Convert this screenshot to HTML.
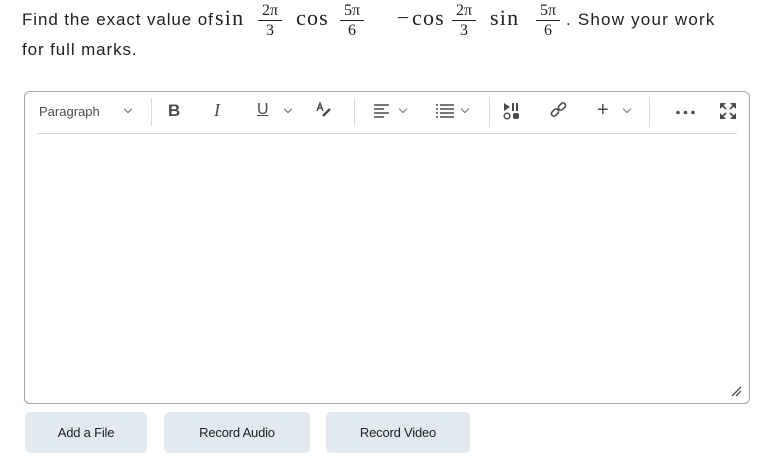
<!DOCTYPE html>
<html><head><style>
body{margin:0;width:770px;height:463px;background:#fff;font-family:"Liberation Sans",sans-serif;color:#494c4e;position:relative;overflow:hidden}
.a{position:absolute;white-space:nowrap}
.t{font-size:17px;color:#202122;letter-spacing:0.9px}
.m{font-family:"Liberation Serif",serif;font-size:22px;color:#202122;letter-spacing:1.2px}
.fr{position:absolute;font-family:"Liberation Serif",serif;font-size:16px;color:#202122;text-align:center;width:24px;line-height:17px}
.fr i{display:block;border-bottom:1px solid #202122;font-style:normal;padding-bottom:1px;margin-bottom:1px}
.ed{position:absolute;left:24px;top:91px;width:726px;height:313px;border:1px solid #a3a6a8;border-radius:6px;box-sizing:border-box}
.btn{position:absolute;top:412px;height:41px;background:#e3e9f1;border-radius:5px;font-size:13px;color:#202122;display:flex;align-items:center;justify-content:center;letter-spacing:-0.2px}
.ic{position:absolute;color:#494c4e}
.sep{position:absolute;top:98px;width:1px;height:28px;background:#d3d9e3}
.chev{position:absolute;top:106px;width:5px;height:5px;border-right:1.3px solid #6e7376;border-bottom:1.3px solid #6e7376;transform:rotate(45deg)}
</style></head><body>
<div class="a t" style="left:22px;top:10px">Find the exact value of</div>
<div class="a m" style="left:215px;top:5px">sin</div>
<div class="fr" style="left:258px;top:2px"><i>2π</i>3</div>
<div class="a m" style="left:296px;top:5px">cos</div>
<div class="fr" style="left:340px;top:2px"><i>5π</i>6</div>
<div class="a m" style="left:397px;top:5px">−</div>
<div class="a m" style="left:412px;top:5px">cos</div>
<div class="fr" style="left:452px;top:2px"><i>2π</i>3</div>
<div class="a m" style="left:490px;top:5px">sin</div>
<div class="fr" style="left:536px;top:2px"><i>5π</i>6</div>
<div class="a t" style="left:566px;top:10px;letter-spacing:1.2px">. Show your work</div>
<div class="a t" style="left:22px;top:40px">for full marks.</div>

<div class="ed"></div>
<div class="a" style="left:37px;top:133px;width:700px;height:1px;background:#d3d9e3"></div>
<div class="a" style="left:39px;top:104px;font-size:13px;color:#494c4e">Paragraph</div>
<div class="chev" style="left:125px"></div>
<div class="sep" style="left:151px"></div>
<div class="a" style="left:168px;top:101px;font-size:17px;font-weight:bold;color:#494c4e">B</div>
<div class="a" style="left:214px;top:100px;font-size:18px;font-style:italic;font-family:'Liberation Serif',serif;color:#494c4e">I</div>
<div class="a" style="left:257px;top:101px;font-size:16px;color:#494c4e;text-decoration:underline">U</div>
<div class="chev" style="left:285px"></div>
<svg class="ic" style="left:316px;top:102px" width="16" height="16"><path d="M1 9 L4 1 L7 9 M2.2 6 H5.8" stroke="#494c4e" stroke-width="1.5" fill="none"/><path d="M7 14 L14 7" stroke="#494c4e" stroke-width="2.5"/></svg>
<div class="sep" style="left:354px"></div>
<svg class="ic" style="left:374px;top:104px" width="16" height="14"><path d="M0 1h15M0 5h10M0 9h15M0 13h10" stroke="#494c4e" stroke-width="1.6"/></svg>
<div class="chev" style="left:400px"></div>
<svg class="ic" style="left:436px;top:104px" width="18" height="14"><path d="M0 1h2M4 1h14M0 5h2M4 5h14M0 9h2M4 9h14M0 13h2M4 13h14" stroke="#494c4e" stroke-width="1.6"/></svg>
<div class="chev" style="left:462px"></div>
<div class="sep" style="left:489px"></div>
<svg class="ic" style="left:503px;top:102px" width="18" height="18"><path d="M1 1 L7 5 L1 9Z" fill="#494c4e"/><path d="M10 1v8M14 1v8" stroke="#494c4e" stroke-width="2"/><circle cx="4" cy="14" r="2.8" stroke="#494c4e" stroke-width="1.5" fill="none"/><rect x="10" y="11" width="6" height="6" rx="2" fill="#494c4e"/></svg>
<svg class="ic" style="left:550px;top:101px" width="18" height="18"><rect x="1" y="9" width="8" height="5" rx="2.5" transform="rotate(-45 5 11.5)" stroke="#494c4e" stroke-width="1.6" fill="none"/><rect x="8" y="3" width="8" height="5" rx="2.5" transform="rotate(-45 12 5.5)" stroke="#494c4e" stroke-width="1.6" fill="none"/></svg>
<div class="a" style="left:597px;top:99px;font-size:20px;color:#494c4e">+</div>
<div class="chev" style="left:624px"></div>
<div class="sep" style="left:649px"></div>
<svg class="ic" style="left:676px;top:110px" width="20" height="5"><circle cx="2" cy="2.5" r="1.8" fill="#494c4e"/><circle cx="9.5" cy="2.5" r="1.8" fill="#494c4e"/><circle cx="17" cy="2.5" r="1.8" fill="#494c4e"/></svg>
<svg class="ic" style="left:719px;top:102px" width="18" height="18"><path d="M1 1h6L1 7Z M17 1h-6L17 7Z M1 17h6L1 11Z M17 17h-6L17 11Z" fill="#494c4e"/><path d="M2 2l5 5M16 2l-5 5M2 16l5-5M16 16l-5-5" stroke="#494c4e" stroke-width="1.8"/></svg>
<svg class="ic" style="left:729px;top:384px" width="14" height="14"><path d="M3 12L12 3M7 12L12 7" stroke="#494c4e" stroke-width="1.3"/></svg>

<div class="btn" style="left:25px;width:122px">Add a File</div>
<div class="btn" style="left:164px;width:146px">Record Audio</div>
<div class="btn" style="left:326px;width:144px">Record Video</div>
</body></html>
